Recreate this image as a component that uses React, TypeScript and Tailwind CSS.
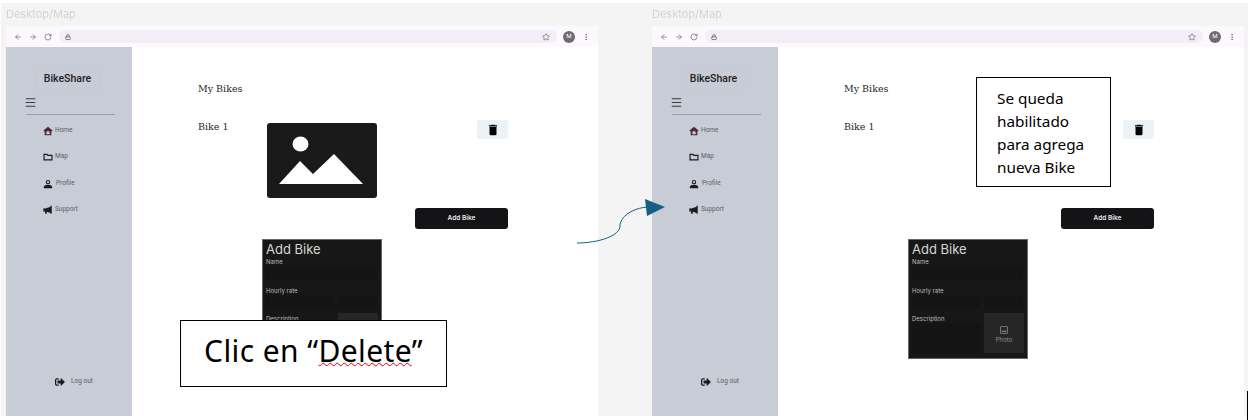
import type { ReactNode } from 'react'
import { ArrowLeft, ArrowRight, RotateCw, Lock, Star, EllipsisVertical, Menu } from 'lucide-react'
import { MdDelete, MdOutlineImage } from 'react-icons/md'
import { FaSignOutAlt } from 'react-icons/fa'

function NavIcon({ children, className }: { children: ReactNode; className: string }) {
  return (
    <svg width="10" height="10" viewBox="0 0 24 24" fill="currentColor" className={`shrink-0 ${className}`}>
      {children}
    </svg>
  )
}

const navItems = [
  {
    label: 'Home',
    rowClass: 'h-[25px]',
    textClass: 'ml-[2px]',
    icon: (
      <NavIcon className="text-[#4a2c33]">
        <path fillRule="evenodd" d="M12 2 1 11l1.6 2L4 12v10h16V12l1.4 1L23 11zM8 20v-4a4 4 0 0 1 8 0v4z" />
      </NavIcon>
    ),
  },
  {
    label: 'Map',
    rowClass: 'h-[27px]',
    textClass: 'ml-[2px]',
    icon: (
      <NavIcon className="text-[#1c1b1f]">
        <path d="M2.5 5.5h7l2 2.5h10v11h-19z" fill="none" stroke="currentColor" strokeWidth="2.8" />
      </NavIcon>
    ),
  },
  {
    label: 'Profile',
    rowClass: 'h-[27px]',
    textClass: 'ml-[3px]',
    icon: (
      <NavIcon className="text-[#1c1b1f]">
        <circle cx="12" cy="7.5" r="4" fill="none" stroke="currentColor" strokeWidth="2.6" />
        <path d="M2 22v-3c0-3.5 5-5.500 10-5.500s10 2 10 5.500v3z" />
      </NavIcon>
    ),
  },
  {
    label: 'Support',
    rowClass: 'h-[26px]',
    textClass: 'ml-[2px]',
    icon: (
      <NavIcon className="text-[#1c1b1f]">
        <path d="M1 8h3v1l14-5V2h3v19h-3v-2L9 16v5H5v-6l-1-.4V16H1z" />
      </NavIcon>
    ),
  },
]

function Toolbar() {
  return (
    <div className="flex h-[21px] items-center bg-[#fdf7fe] pl-[8px] pr-[8px] text-[#5f6368]">
      <ArrowLeft size={8} className="mr-[7px]" />
      <ArrowRight size={8} className="mr-[7px]" />
      <RotateCw size={8} />
      <div className="ml-[7px] flex h-[13px] flex-1 items-center justify-between rounded-full bg-[#f3edf8] pl-[6px] pr-[7px]">
        <Lock size={6} strokeWidth={3} />
        <Star size={8} />
      </div>
      <div className="ml-[6px] flex h-[12px] w-[12px] items-center justify-center rounded-full bg-[#6f6b70] text-[6px] font-medium text-white">
        M
      </div>
      <EllipsisVertical size={8} className="ml-[7px]" />
    </div>
  )
}

function Sidebar() {
  return (
    <aside className="flex w-[126px] shrink-0 flex-col bg-[#c8ccd6] font-['Roboto',sans-serif]">
      <div className="ml-[29px] mt-[20px] flex h-[23px] w-[65px] items-center justify-center rounded-[3px] border border-[#c5c9d3] text-[10.5px] font-medium text-[#1f2024]">
        BikeShare
      </div>
      <Menu size={13} className="ml-[18px] mt-[6px] text-[#3a3b40]" strokeWidth={2} />
      <div className="ml-[20px] mt-[5px] h-px w-[89px] bg-[#9a9ca6]" />
      <nav className="ml-[37px] mt-[3px]">
        {navItems.map((item) => (
          <div key={item.label} className={`flex items-center ${item.rowClass}`}>
            {item.icon}
            <span className={`text-[6.5px] text-[#5c5d63] ${item.textClass}`}>{item.label}</span>
          </div>
        ))}
      </nav>
      <div className="ml-[49px] mt-auto mb-[29px] flex items-center">
        <FaSignOutAlt size={10} className="text-[#1c1b1f]" />
        <span className="ml-[6px] text-[6.5px] text-[#5c5d63]">Log out</span>
      </div>
    </aside>
  )
}

function ImagePlaceholder() {
  return (
    <svg width="110" height="75" viewBox="0 0 110 75" className="mt-[3px] shrink-0">
      <rect width="110" height="75" rx="3" fill="#1a1a1a" />
      <ellipse cx="33.5" cy="21" rx="8" ry="7.5" fill="#fff" />
      <polygon points="12,61 33,38 46,51 67,31 96,61" fill="#fff" />
    </svg>
  )
}

function AddBikePanel() {
  return (
    <div className="ml-[64px] mt-[10px] h-[120px] w-[120px] border border-[#666] bg-[#171717] pl-[2px] font-['Inter',sans-serif] text-[#bdbdbd]">
      <div className="pl-[1px] text-[13px] leading-[18px] text-[#d6d6d6]">Add Bike</div>
      <div className="pl-[1px] text-[6px] leading-[8px]">Name</div>
      <div className="mt-[2px] h-[12px] w-[112px] bg-[#141414]" />
      <div className="mt-[7px] pl-[1px] text-[6px] leading-[8px]">Hourly rate</div>
      <div className="flex gap-[4px]">
        <div className="h-[13px] w-[69px] bg-[#141414]" />
        <div className="h-[13px] w-[39px] bg-[#141414]" />
      </div>
      <div className="mt-[5px] flex gap-[4px]">
        <div className="w-[69px] pt-[2px]">
          <div className="pl-[1px] text-[6px] leading-[8px]">Description</div>
          <div className="h-[30px] bg-[#141414]" />
        </div>
        <div className="flex h-[40px] w-[40px] flex-col items-center justify-center bg-[#262626] pt-[3px] text-[#8f8f8f]">
          <MdOutlineImage size={10} />
          <span className="mt-[1px] text-[6px] leading-[8px]">Photo</span>
        </div>
      </div>
    </div>
  )
}

function Frame({ showImage }: { showImage: boolean }) {
  return (
    <section className="flex h-full w-[592px] shrink-0 flex-col blur-[0.4px]">
      <div className="flex h-[23px] items-center font-['Inter',sans-serif] text-[11px] text-[#d4d4d4]">Desktop/Map</div>
      <Toolbar />
      <div className="flex h-[369px]">
        <Sidebar />
        <main className="flex flex-1 flex-col bg-white pl-[66px] pr-[90px] pt-[35px] font-['DejaVu_Serif',serif] text-[#1f1f1f]">
          <h1 className="text-[9.5px] leading-[14px]">My Bikes</h1>
          <div className="mt-[24px] flex h-[78px]">
            <span className="w-[69px] shrink-0 text-[9.5px] leading-[14px]">Bike 1</span>
            {showImage && <ImagePlaceholder />}
            <button className="ml-auto flex h-[19px] w-[31px] items-center justify-center rounded-[2px] bg-[#edf2f7] text-black">
              <MdDelete size={14} />
            </button>
          </div>
          <button className="mt-[10px] h-[21px] w-[93px] self-end rounded-[3px] bg-[#141416] font-['Inter',sans-serif] text-[6.5px] font-semibold text-[#e8e8e8]">
            Add Bike
          </button>
          <AddBikePanel />
        </main>
      </div>
    </section>
  )
}

export default function App() {
  return (
    <div className="relative h-[420px] w-[1248px] overflow-hidden bg-white pt-[3px]">
      <div className="ml-px flex h-[413px] gap-[54px] bg-[#f4f4f4] pl-[5px]">
        <Frame showImage />
        <Frame showImage={false} />
      </div>

      {/* notas encima de las pantallas */}
      <div className="absolute left-[180px] top-[320px] flex h-[67px] w-[267px] items-center justify-center border border-black bg-white pb-[6px] font-['Noto_Sans',sans-serif] text-[30px] tracking-[0.4px] text-black">
        <span>
          Clic en “<span className="underline decoration-[#e00000] decoration-wavy decoration-1 underline-offset-0">Delete</span>”
        </span>
      </div>
      <div className="absolute left-[976px] top-[77px] h-[110px] w-[135px] border border-black bg-white pl-[20px] pt-[9px] font-['Noto_Sans',sans-serif] text-[15.3px] leading-[23px] text-black">
        Se queda
        <br />
        habilitado
        <br />
        para agrega
        <br />
        nueva Bike
      </div>

      <svg width="100" height="60" viewBox="0 0 100 60" className="absolute left-[570px] top-[190px]">
        <path d="M7 53 C28 53 50 46 50 36 C50 27 62 18 78 17" fill="none" stroke="#156082" strokeWidth="1" />
        <polygon points="75,9 95,17 77,26" fill="#156082" />
      </svg>

      <div className="absolute left-[1247px] top-[391px] h-[29px] w-px bg-black" />
    </div>
  )
}
